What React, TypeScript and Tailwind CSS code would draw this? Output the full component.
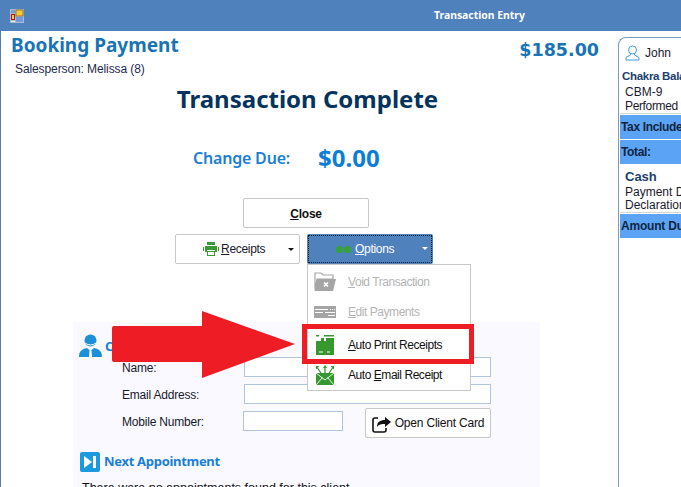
const FONT = "font-['Liberation_Sans',Arial,sans-serif]";
const HEADING = "font-['Noto_Sans','Liberation_Sans',sans-serif]";

function AppIcon() {
  return (
    <svg width="14" height="14" viewBox="0 0 14 14" className="ml-[10px]">
      <rect x="0" y="0" width="14" height="14" fill="#aebccd" />
      <rect x="1" y="1" width="4" height="3" fill="#7c9cc8" />
      <rect x="1" y="5" width="4" height="6" fill="#b81010" />
      <rect x="2" y="6" width="2" height="4" fill="#f0c860" />
      <rect x="6" y="1" width="7" height="6" fill="#f6c93c" stroke="#7a5c10" strokeWidth="0.7" />
      <rect x="6" y="8" width="7" height="5" fill="#6f9be0" />
      <rect x="1" y="12" width="4" height="1" fill="#dfe6f0" />
    </svg>
  );
}

function PrinterIcon() {
  return (
    <svg width="16" height="14" viewBox="0 0 16 14">
      <path d="M4 0h8v3H4z M2 4h12v6H12V8H4v2H2z M4 9h8v5H4z" fill="#3a9a3a" />
      <rect x="5" y="10" width="6" height="3" fill="#fff" />
      <rect x="0" y="5" width="1" height="4" fill="#3a9a3a" />
      <rect x="15" y="5" width="1" height="4" fill="#3a9a3a" />
    </svg>
  );
}

function FolderIcon() {
  return (
    <svg width="22" height="20" viewBox="0 0 22 20">
      <path d="M1 1h6l2 2h10v4H3L1 17z" fill="#fff" stroke="#a5a5a5" strokeWidth="1.2" />
      <path d="M3 7h19l-3 12H0.500z" fill="#a5a5a5" />
      <path d="M10 10.500l4 4M14 10.500l-4 4" stroke="#fff" strokeWidth="1.700" />
    </svg>
  );
}

function PaymentsIcon() {
  return (
    <svg width="22" height="12" viewBox="0 0 22 12">
      <rect width="22" height="12" fill="#a5a5a5" />
      <path d="M1 3.500h13M1 6.500h8M16 3.500h1M18 3.500h1M20 3.500h1M11 6.500h10M14 9.500h7" stroke="#fff" strokeWidth="1" />
    </svg>
  );
}

function AutoPrintIcon() {
  return (
    <svg width="18" height="20" viewBox="0 0 18 20">
      <path d="M0 0h3v1.500H0zM8 0h10v1.500H8zM5 3h3v3H5zM10 3h8v3h-8zM0 6h18v14H0z" fill="#36982f" />
      <path d="M3 16.500h4v1H3zM11 16.500h3v1h-3z" fill="#fff" />
    </svg>
  );
}

function EmailIcon() {
  return (
    <svg width="18" height="20" viewBox="0 0 18 20">
      <rect x="0" y="8" width="18" height="12" fill="#36982f" />
      <path d="M0 8l9 7 9-7M0 20l6.500-7.500M18 20l-6.500-7.500" stroke="#fff" strokeWidth="0.9" fill="none" />
      <path d="M9 8V2M5 8L1.500 3M13 8l3.500-5" stroke="#36982f" strokeWidth="1.300" />
      <path d="M7 3l2-3 2 3zM0 1h3.500L0 4.500zM18 1h-3.500L18 4.500z" fill="#36982f" />
    </svg>
  );
}

function ClientIcon() {
  return (
    <svg width="23" height="23" viewBox="0 0 23 23">
      <circle cx="11.500" cy="6.500" r="6" fill="#1b8fd8" />
      <path d="M6 9q5.500 4 11 0" stroke="#fff" strokeWidth="1" fill="none" />
      <path d="M0 23c0-6 3-8 8-9l3.500 3 3.500-3c5 1 8 3 8 9z" fill="#1b8fd8" />
      <path d="M10.500 16.500h2l0.500 6.500h-3z" fill="#fff" />
    </svg>
  );
}

function NextIcon() {
  return (
    <svg width="20" height="20" viewBox="0 0 20 20">
      <rect width="20" height="20" rx="2" fill="#1b9ae0" />
      <path d="M4 4l8 6-8 6z" fill="#fff" />
      <rect x="13" y="4" width="3" height="12" fill="#fff" />
    </svg>
  );
}

function OpenCardIcon() {
  return (
    <svg width="19" height="19" viewBox="0 0 19 19">
      <path d="M6 4H3a2 2 0 0 0-2 2v10a2 2 0 0 0 2 2h9a2 2 0 0 0 2-2v-2" fill="none" stroke="#111" strokeWidth="1.600" />
      <path d="M5 13c0-5 3-7 8-7V3l6 5-6 5v-3c-3 0-6 0-8 3z" fill="#111" />
    </svg>
  );
}

function UserOutline() {
  return (
    <svg width="15" height="16" viewBox="0 0 15 16" fill="none" stroke="#3d9be0" strokeWidth="1">
      <circle cx="7.500" cy="5" r="4" />
      <path d="M5.500 8.500v1.500L1 12.500V15h13v-2.500L9.500 10V8.500" />
    </svg>
  );
}

function FormRow({ label, inputClass }: { label: string; inputClass: string }) {
  return (
    <div className="flex h-[20px] items-center">
      <span className="w-[171px] shrink-0 pt-[2px] pl-[49px] text-[12px] tracking-[-0.2px] whitespace-nowrap text-[#1a1a2e]">{label}</span>
      <div className={`h-[20px] shrink-0 border border-[#b0c4de] bg-white ${inputClass}`} />
    </div>
  );
}

function MenuItem({ icon, children, muted, className }: { icon: React.ReactNode; children: React.ReactNode; muted?: boolean; className?: string }) {
  return (
    <div className={`flex h-[30px] items-center ${className ?? ""}`}>
      <span className="flex w-[33px] shrink-0 justify-center">{icon}</span>
      <span className={`ml-[7px] text-[12px] tracking-[-0.45px] whitespace-nowrap ${muted ? "text-[#b4b4b4]" : "text-[#111]"}`}>{children}</span>
    </div>
  );
}

export default function App() {
  return (
    <div className={`relative flex h-[487px] w-[681px] flex-col overflow-hidden bg-white ${FONT}`}>
      {/* window title */}
      <div className="flex h-[31px] shrink-0 items-center bg-[#4f81bd]">
        <AppIcon />
        <span className={`ml-[410px] text-[10.400px] font-bold text-white ${HEADING}`}>Transaction Entry</span>
      </div>

      <div className="flex min-h-0 flex-1 border-l border-[#4f81bd]">
        <div className="flex w-[617px] shrink-0 flex-col">
          <div className="flex items-start justify-between pt-[1px] pr-[19px] pl-[10px]">
            <h1 className={`text-[19px] leading-[26px] font-bold text-[#1874b4] ${HEADING}`}>Booking Payment</h1>
            <span className="font-['DejaVu_Sans',sans-serif] text-[17.500px] leading-[36px] font-bold text-[#1874b4]">$185.00</span>
          </div>
          <div className="-mt-[7px] pl-[14px] text-[12px] leading-[16px] tracking-[-0.1px] text-[#1e2a50]">Salesperson: Melissa (8)</div>
          <h2 className={`mt-[4px] pr-[4px] text-center text-[24px] leading-[36px] font-bold text-[#04335e] ${HEADING}`}>Transaction Complete</h2>

          <div className="mt-[25px] flex items-center pl-[192px]">
            <span className={`w-[125px] text-[16px] font-semibold tracking-[-0.2px] text-[#1a7fd4] ${HEADING}`}>Change Due:</span>
            <span className={`text-[24px] leading-[32px] font-bold text-[#0c7ed8] ${HEADING}`}>$0.00</span>
          </div>

          <div className="mt-[24px] flex pl-[242px]">
            <button className="h-[30px] w-[126px] rounded-[2px] border border-[#c8c8c8] bg-white pt-[1px] text-[12px] font-bold tracking-[-0.2px] text-[#111]">
              <span className="underline">C</span>lose
            </button>
          </div>

          <div className="mt-[6px] flex pl-[174px]">
            <button className="relative flex h-[30px] w-[125px] items-center rounded-[2px] border border-[#c8c8c8] bg-white pl-[27px] text-[12px] tracking-[-0.3px] text-[#1a1a2e]">
              <PrinterIcon />
              <span className="ml-[2px]"><span className="underline">R</span>eceipts</span>
              <span className="absolute top-[13px] right-[5px] h-0 w-0 border-x-[3px] border-t-[3px] border-x-transparent border-t-[#111]" />
            </button>
            <button className="relative ml-[7px] flex h-[30px] w-[126px] items-center rounded-[2px] bg-[#4f81bd] pl-[29px] text-[12px] tracking-[-0.3px] text-white">
              <span className="absolute inset-[1px] border border-dotted border-[#0a1a30]" />
              <span className="h-[7px] w-[7px] rounded-full bg-[#36a236]" />
              <span className="ml-[1px] h-[7px] w-[7px] rounded-full bg-[#36a236]" />
              <span className="ml-[4px]"><span className="underline">O</span>ptions</span>
              <span className="absolute top-[13px] right-[5px] h-0 w-0 border-x-[3px] border-t-[3px] border-x-transparent border-t-white" />
            </button>
          </div>

          {/* lower card, runs off the bottom of the window */}
          <div className="mt-[58px] ml-[72px] w-[467px] flex-1 bg-[#f9f9ff]">
            <div className="flex h-[35px] items-end gap-[3px] pl-[6px]">
              <ClientIcon />
              <span className={`text-[13px] leading-[22px] font-bold text-[#1a7fd4] ${HEADING}`}>Client</span>
            </div>
            <div className="flex flex-col gap-[7px]">
              <FormRow label="Name:" inputClass="w-[247px]" />
              <FormRow label="Email Address:" inputClass="w-[247px]" />
              <div className="flex h-[20px] items-center">
                <FormRow label="Mobile Number:" inputClass="-ml-[1px] w-[100px]" />
                <button className="mt-[4px] ml-[22px] flex h-[30px] w-[126px] shrink-0 items-center justify-center gap-[4px] rounded-[2px] border border-[#c8c8c8] bg-white text-[12px] tracking-[-0.2px] text-[#111]">
                  <OpenCardIcon />
                  Open Client Card
                </button>
              </div>
            </div>
            <div className="mt-[21px] flex items-center gap-[4px] pl-[7px]">
              <NextIcon />
              <span className={`text-[13px] font-bold tracking-[-0.3px] text-[#1a7fd4] ${HEADING}`}>Next Appointment</span>
            </div>
            <p className="mt-[7px] pl-[9px] text-[12.500px] whitespace-nowrap text-[#111]">There were no appointments found for this client.</p>
          </div>
        </div>

        {/* right summary, cut off by the window edge */}
        <div className="mt-[6px] w-[220px] shrink-0 rounded-tl-[8px] border-t border-l border-[#7f9db9] pl-[1px] text-[12px] whitespace-nowrap text-[#1a1a2e]">
          <div className="flex h-[30px] items-center gap-[5px] pl-[5px]">
            <UserOutline />
            <span>John</span>
          </div>
          <div className="pl-[2px] text-[11.500px] leading-[16px] font-bold tracking-[-0.3px] text-[#1c3f70]">Chakra Balance</div>
          <div className="mt-[2px] pl-[5px] leading-[13px]">CBM-9</div>
          <div className="border-b border-[#d4d4d4] pl-[5px] leading-[14px] tracking-[-0.35px]">
            Performed <span className="text-[#e8912c]">by</span>
          </div>
          <div className="mt-[1px] flex h-[24px] items-center bg-[#5ba4f5] pl-[1px] font-bold tracking-[-0.35px] text-[#10243f]">Tax Included</div>
          <div className="mt-[1px] flex h-[24px] items-center bg-[#5ba4f5] pl-[1px] font-bold tracking-[-0.35px] text-[#10243f]">Total:</div>
          <div className="mt-[4px] pl-[5px] text-[13px] leading-[18px] font-bold text-[#1c3f70]">Cash</div>
          <div className="pl-[5px] leading-[13px]">Payment Date</div>
          <div className="border-b border-[#d4d4d4] pl-[5px] leading-[13px]">Declaration</div>
          <div className="mt-[1px] flex h-[24px] items-center bg-[#5ba4f5] pl-[1px] font-bold tracking-[-0.2px] text-[#10243f]">Amount Due</div>
        </div>
      </div>

      {/* open dropdown */}
      <div className="absolute top-[264px] left-[307px] flex h-[127px] w-[164px] flex-col border border-[#c8c8c8] bg-white pt-[2px]">
        <MenuItem icon={<FolderIcon />} muted>
          <span className="underline">V</span>oid Transaction
        </MenuItem>
        <MenuItem icon={<PaymentsIcon />} muted>
          <span className="underline">E</span>dit Payments
        </MenuItem>
        <MenuItem icon={<AutoPrintIcon />} className="mt-[3px]">
          <span className="underline">A</span>uto Print Receipts
        </MenuItem>
        <MenuItem icon={<EmailIcon />}>
          Auto <span className="underline">E</span>mail Receipt
        </MenuItem>
      </div>

      {/* annotation drawn over the screenshot */}
      <div className="absolute top-[324px] left-[302px] h-[40px] w-[172px] border-[5px] border-[#ee1c25]" />
      <svg className="absolute top-[311px] left-[111px]" width="185" height="67" viewBox="0 0 185 67">
        <path d="M1 17Q1 15 3 15H91V0L184 33 91 67V51H3Q1 51 1 49Z" fill="#ee1c25" />
      </svg>
    </div>
  );
}
